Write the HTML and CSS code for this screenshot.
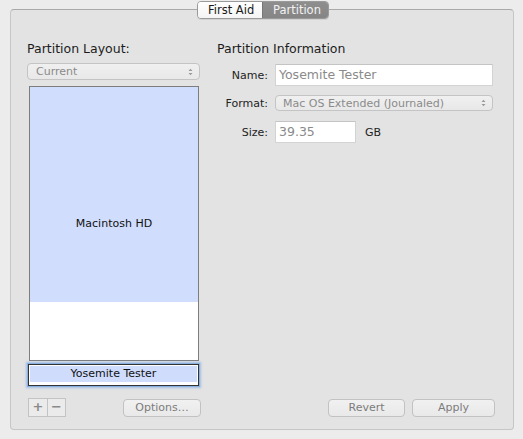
FILE: index.html
```html
<!DOCTYPE html>
<html>
<head>
<meta charset="utf-8">
<link rel="stylesheet" href="styles.css">
</head>
<body>
<div class="window">
  <div class="tabs">
    <div class="tab">First Aid</div>
    <div class="tab active">Partition</div>
  </div>
  <div class="panel">
    <div class="left">
      <div class="title">Partition Layout:</div>
      <div class="popup wide"><span>Current</span><svg class="arrows" width="5" height="8" viewBox="0 0 5 8"><path d="M0.5 3 L2.5 0.8 L4.5 3 Z M0.5 5 L2.5 7.2 L4.5 5 Z" fill="#9a9a9a"/></svg></div>
      <div class="layout">
        <div class="part mac">Macintosh HD</div>
        <div class="part free"></div>
      </div>
      <div class="selected"><div class="sel-fill">Yosemite Tester</div></div>
      <div class="left-buttons">
        <div class="pm">
          <div class="pm-btn">+</div>
          <div class="pm-btn">&minus;</div>
        </div>
        <div class="btn options">Options…</div>
      </div>
    </div>
    <div class="right">
      <div class="title">Partition Information</div>
      <div class="form">
        <div class="row name-row">
          <div class="label">Name:</div>
          <div class="field name">Yosemite Tester</div>
        </div>
        <div class="row format-row">
          <div class="label">Format:</div>
          <div class="popup format"><span>Mac OS Extended (Journaled)</span><svg class="arrows" width="5" height="8" viewBox="0 0 5 8"><path d="M0.5 3 L2.5 0.8 L4.5 3 Z M0.5 5 L2.5 7.2 L4.5 5 Z" fill="#9a9a9a"/></svg></div>
        </div>
        <div class="row size-row">
          <div class="label">Size:</div>
          <div class="field size">39.35</div>
          <div class="unit">GB</div>
        </div>
      </div>
      <div class="spacer"></div>
      <div class="right-buttons">
        <div class="btn revert">Revert</div>
        <div class="btn apply">Apply</div>
      </div>
    </div>
  </div>
</div>
</body>
</html>
```

FILE: styles.css
```css
* { box-sizing: border-box; }
html, body {
  margin: 0;
  padding: 0;
  background: #ececec;
  width: 523px;
  height: 439px;
  overflow: hidden;
  font-family: "DejaVu Sans", "Liberation Sans", sans-serif;
}
.window {
  position: relative;
  padding: 9px 9px 9px 10px;
}
.tabs {
  position: absolute;
  top: 1px;
  left: 197px;
  display: flex;
  height: 18px;
  border: 1px solid #9a9a9a;
  border-radius: 4px;
  overflow: hidden;
  box-shadow: 0 1px 0 rgba(0,0,0,0.08);
  z-index: 2;
}
.tab {
  font-size: 11.5px;
  line-height: 16px;
  padding: 0 10px;
  background: linear-gradient(#ffffff, #f4f4f4);
  color: #1a1a1a;
}
.tab:first-child { width: 64px; padding: 0 0 0 10px; }
.tab.active {
  width: 66px;
  background: linear-gradient(#8e8e8e, #858585);
  color: #f2f2f2;
  border-left: 1px solid #777;
}
.panel {
  display: flex;
  width: 504px;
  height: 421px;
  background: #e3e3e3;
  border: 1px solid #c6c6c6;
  border-top-color: #a9a9a9;
  border-radius: 4px;
  padding: 31px 18px 12px 16px;
}
.title {
  font-size: 12.5px;
  line-height: 16px;
  color: #1c1c1c;
  height: 16px;
}
.left {
  width: 174px;
  display: flex;
  flex-direction: column;
}
.popup {
  display: flex;
  justify-content: space-between;
  align-items: center;
  height: 17px;
  border: 1px solid #c4c4c4;
  border-radius: 4px;
  background: linear-gradient(#f0f0f0, #e8e8e8);
  color: #8a8a8a;
  font-size: 11px;
  padding: 0 6px 0 8px;
}
.popup.wide { width: 173px; margin-top: 6px; }
.arrows { display: block; flex: none; }
.layout {
  margin: 6px 0 0 2px;
  width: 170px;
  height: 275px;
  border: 1px solid #7d7d7d;
  display: flex;
  flex-direction: column;
  background: #fff;
}
.part.mac {
  height: 215px;
  background: #d0ddfd;
  font-size: 11px;
  line-height: 14px;
  text-align: center;
  color: #111;
  padding-top: 130px;
}
.part.free { flex: 1; background: #fff; }
.selected {
  margin: 3px 0 0 1px;
  width: 171px;
  height: 22px;
  border: 1px solid #333;
  box-shadow: 0 0 0 1px #8ab0e0, 0 0 2px 2px rgba(110,160,230,0.55);
  background: #fff;
  padding: 1px 1px 3px 1px;
}
.sel-fill {
  height: 100%;
  background: #cfdcfc;
  font-size: 11px;
  line-height: 16px;
  text-align: center;
  color: #111;
}
.left-buttons {
  display: flex;
  align-items: center;
  justify-content: space-between;
  margin-top: 12px;
  width: 174px;
}
.pm {
  display: flex;
  margin-left: 1px;
  border: 1px solid #c3c3c3;
  background: #ebebeb;
}
.pm-btn {
  width: 18px;
  height: 17px;
  font-size: 13px;
  line-height: 15px;
  font-weight: bold;
  text-align: center;
  color: #8a8a8a;
}
.pm-btn + .pm-btn { border-left: 1px solid #c3c3c3; }
.btn {
  height: 18px;
  border: 1px solid #c2c2c2;
  border-radius: 4px;
  background: linear-gradient(#f1f1f1, #e9e9e9);
  font-size: 11px;
  line-height: 16px;
  color: #7c7c7c;
  text-align: center;
}
.btn.options { width: 78px; }
.right {
  margin-left: 16px;
  flex: 1;
  display: flex;
  flex-direction: column;
}
.form {
  display: flex;
  flex-direction: column;
  margin-top: 7px;
}
.row {
  display: flex;
  align-items: center;
}
.label {
  width: 51px;
  text-align: right;
  font-size: 11px;
  color: #222;
  margin-right: 7px;
}
.field {
  background: #fff;
  border: 1px solid #d3d3d3;
  border-top-color: #c4c4c4;
  height: 22px;
  font-size: 12.5px;
  line-height: 20px;
  color: #8a8a8a;
  padding-left: 3px;
}
.field.name { width: 218px; }
.popup.format { width: 218px; height: 16px; color: #8a8a8a; padding-left: 7px; }
.format-row { margin-top: 9px; }
.size-row { margin-top: 10px; }
.field.size { width: 81px; }
.unit { font-size: 11px; color: #222; margin-left: 9px; }
.spacer { flex: 1; }
.right-buttons {
  display: flex;
  justify-content: flex-end;
  gap: 7px;
  padding-right: 0;
}
.btn.revert { width: 77px; }
.btn.apply { width: 83px; }
```
